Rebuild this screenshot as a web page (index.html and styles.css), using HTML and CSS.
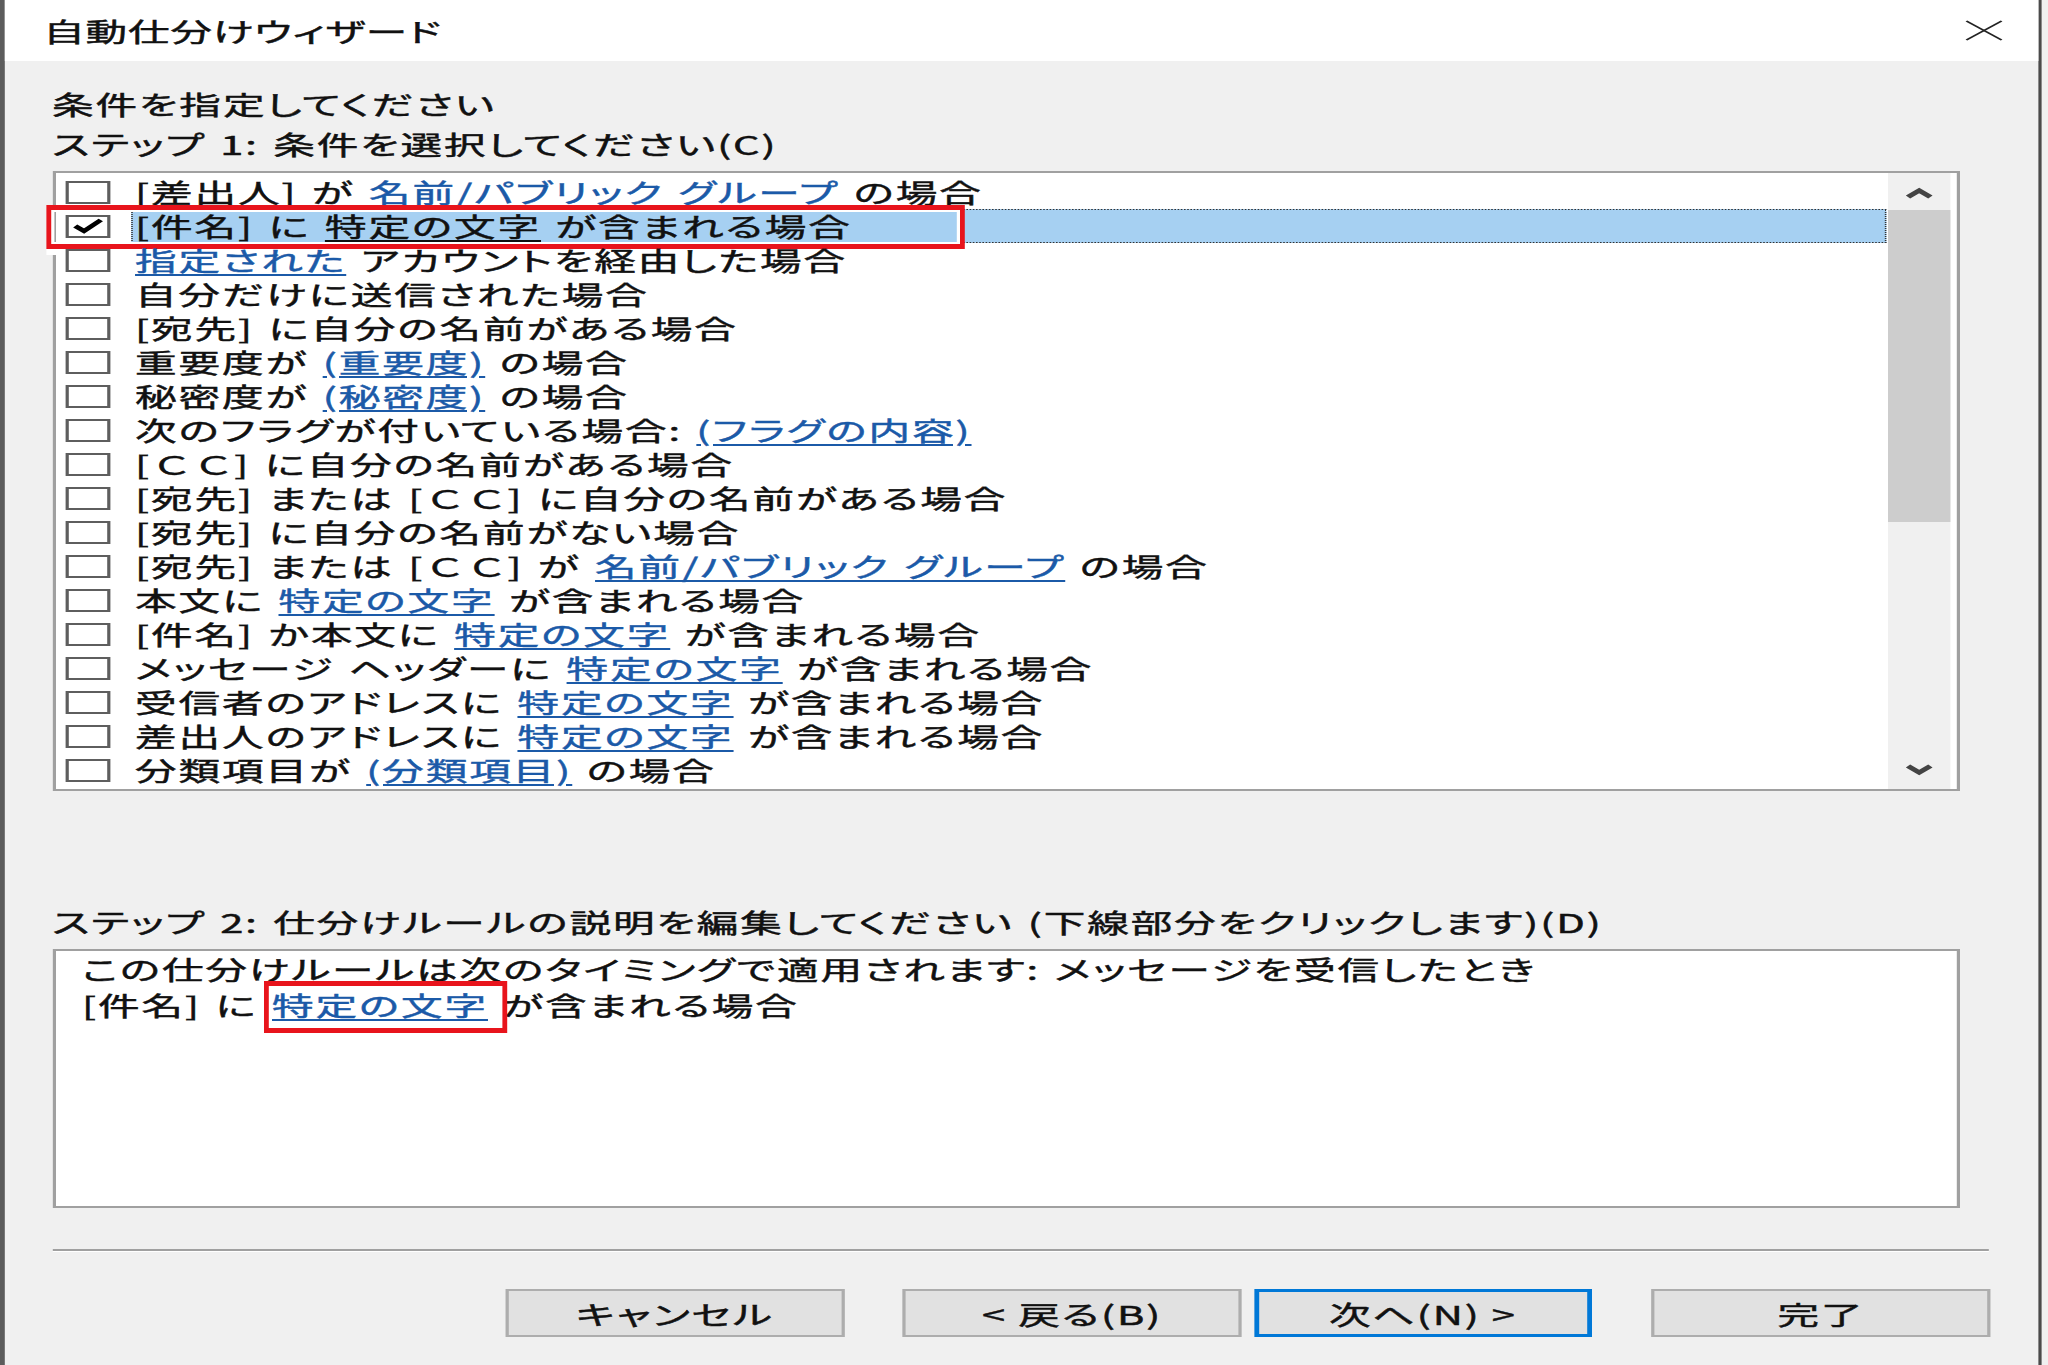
FILE: index.html
```html
<!DOCTYPE html>
<html lang="ja">
<head>
    <meta charset="UTF-8" />
    <title>自動仕分けウィザード</title>
    <link rel="stylesheet" href="styles.css">
</head>
<body>
    <div class="dialog">
        <div class="titlebar">
            <span class="title">自動仕分けウィザード</span>
            <svg class="close" width="26" height="23" viewBox="0 0 26 23">
                <line x1="2" y1="2" x2="24" y2="21" stroke="#222" stroke-width="1.6"/>
                <line x1="24" y1="2" x2="2" y2="21" stroke="#222" stroke-width="1.6"/>
            </svg>
        </div>
        <div class="content">
            <div class="label">条件を指定してください</div>
            <div class="label">ステップ 1: 条件を選択してください(C)</div>
            <div class="listbox">
                <div class="rows">
                    <div class="row"><span class="cb"></span><span class="text">[差出人] が <a class="link">名前/パブリック グループ</a> の場合</span></div>
                    <div class="row sel"><span class="cb">
                        <svg width="24" height="18" viewBox="0 0 24 18"><polyline points="4,9 9.5,14 20,3" fill="none" stroke="#000" stroke-width="3.8"/></svg>
                    </span><span class="text">[件名] に <a class="link">特定の文字</a> が含まれる場合</span></div>
                    <div class="row"><span class="cb"></span><span class="text"><a class="link">指定された</a> アカウントを経由した場合</span></div>
                    <div class="row"><span class="cb"></span><span class="text">自分だけに送信された場合</span></div>
                    <div class="row"><span class="cb"></span><span class="text">[宛先] に自分の名前がある場合</span></div>
                    <div class="row"><span class="cb"></span><span class="text">重要度が <a class="link">(重要度)</a> の場合</span></div>
                    <div class="row"><span class="cb"></span><span class="text">秘密度が <a class="link">(秘密度)</a> の場合</span></div>
                    <div class="row"><span class="cb"></span><span class="text">次のフラグが付いている場合: <a class="link">(フラグの内容)</a></span></div>
                    <div class="row"><span class="cb"></span><span class="text">[<span class="fw">ＣＣ</span>] に自分の名前がある場合</span></div>
                    <div class="row"><span class="cb"></span><span class="text">[宛先] または [<span class="fw">ＣＣ</span>] に自分の名前がある場合</span></div>
                    <div class="row"><span class="cb"></span><span class="text">[宛先] に自分の名前がない場合</span></div>
                    <div class="row"><span class="cb"></span><span class="text">[宛先] または [<span class="fw">ＣＣ</span>] が <a class="link">名前/パブリック グループ</a> の場合</span></div>
                    <div class="row"><span class="cb"></span><span class="text">本文に <a class="link">特定の文字</a> が含まれる場合</span></div>
                    <div class="row"><span class="cb"></span><span class="text">[件名] か本文に <a class="link">特定の文字</a> が含まれる場合</span></div>
                    <div class="row"><span class="cb"></span><span class="text">メッセージ ヘッダーに <a class="link">特定の文字</a> が含まれる場合</span></div>
                    <div class="row"><span class="cb"></span><span class="text">受信者のアドレスに <a class="link">特定の文字</a> が含まれる場合</span></div>
                    <div class="row"><span class="cb"></span><span class="text">差出人のアドレスに <a class="link">特定の文字</a> が含まれる場合</span></div>
                    <div class="row"><span class="cb"></span><span class="text">分類項目が <a class="link">(分類項目)</a> の場合</span></div>
                </div>
                <div class="scrollbar">
                    <div class="sb-btn">
                        <svg width="19" height="12" viewBox="0 0 19 12"><polyline points="2.5,10 9.5,3.5 16.5,10" fill="none" stroke="#444" stroke-width="4"/></svg>
                    </div>
                    <div class="sb-thumb"></div>
                    <div class="sb-track"></div>
                    <div class="sb-btn">
                        <svg width="19" height="12" viewBox="0 0 19 12"><polyline points="2.5,2 9.5,8.5 16.5,2" fill="none" stroke="#444" stroke-width="4"/></svg>
                    </div>
                </div>
            </div>

            <div class="label step2">ステップ 2: 仕分けルールの説明を編集してください (下線部分をクリックします)(D)</div>
            <div class="desc">
                <div>この仕分けルールは次のタイミングで適用されます: メッセージを受信したとき</div>
                <div>[件名] に <a class="link marked">特定の文字</a> が含まれる場合</div>
            </div>

            <div class="separator"></div>

            <div class="buttons">
                <button class="btn btn-cancel">キャンセル</button>
                <button class="btn btn-back">&lt; 戻る(B)</button>
                <button class="btn btn-next">次へ(N) &gt;</button>
                <button class="btn btn-finish">完了</button>
            </div>
        </div>
    </div>
</body>
</html>
```

FILE: styles.css
```css
/* the screenshot is stretched sideways, so the dialog is laid out
   narrow and widened with one scaleX on the root */
body {
    margin: 0;
    background: #f0f0f0;
    font-family: "Noto Sans CJK JP", "Noto Sans", sans-serif;
    font-size: 26px;
    letter-spacing: 1.2px;
    word-spacing: 2px;
    color: #111;
    font-feature-settings: "palt";
    -webkit-text-stroke: 0.45px currentColor;
    overflow: hidden;
}

.dialog {
    width: 1276px;
    height: 1365px;
    box-sizing: border-box;
    transform: scaleX(1.6);
    transform-origin: 0 0;
    background: #f0f0f0;
    border-left: 3px solid #5c5c5c;
    border-right: 2px solid #4a4a4a;
    display: flex;
    flex-direction: column;
}

.titlebar {
    height: 61px;
    flex: none;
    background: #fff;
    display: flex;
    align-items: center;
    justify-content: space-between;
    padding: 0 21px 0 24px;
}
.title { line-height: 40px; letter-spacing: 0.5px; }
.close { display: block; }

.content {
    padding: 23px 0 0 29.5px;
}

.label {
    line-height: 40px;
    white-space: nowrap;
}
.step2 { margin-top: 111px; }

/* full-width letters keep their whole cell, as in the original */
.fw {
    font-feature-settings: normal;
    letter-spacing: 0;
}

/* condition list */
.listbox {
    width: 1192px;
    height: 620px;
    box-sizing: border-box;
    margin-top: 7px;
    border: 2px solid #a0a0a0;
    background: #fff;
    display: flex;
}
.rows {
    flex: 1;
    padding-top: 2px;
}
.row {
    height: 34px;
    display: flex;
    align-items: center;
    position: relative;
}
.cb {
    width: 28px;
    height: 23px;
    box-sizing: border-box;
    margin-left: 6px;
    border: 2px solid #5e5e5e;
    background: #fff;
    flex: none;
    display: flex;
    align-items: center;
    justify-content: center;
}
.cb svg { display: block; }
.text {
    flex: 1;
    margin: 0 1px 0 13.4px;
    padding-left: 2.5px;
    height: 34px;
    line-height: 34px;
    white-space: nowrap;
}
.row.sel .text {
    background: #a6d0f2;
    outline: 1px dotted #333;
    outline-offset: -1px;
}
.row.sel .link { color: #111; }

/* red annotation boxes */
.row.sel::after {
    content: '';
    position: absolute;
    left: -5.1px;
    top: -4px;
    width: 574px;
    height: 44px;
    box-sizing: border-box;
    border: 5px solid #e8141c;
    border-left-width: 3.2px;
    border-right-width: 3.2px;
    box-shadow: inset 0 0 0 2px #fff, 0 6px 0 0 #fff;
}
.marked { position: relative; }
.marked::after {
    content: '';
    position: absolute;
    left: -5px;
    right: -11.5px;
    top: -5px;
    bottom: -10px;
    border: 5px solid #e8141c;
    border-left-width: 3.2px;
    border-right-width: 3.2px;
    box-shadow: inset 0 0 0 2px #fff;
}

.link {
    color: #1b5aa8;
    text-decoration: underline;
    text-underline-offset: 3px;
}

.scrollbar {
    width: 38.75px;
    margin-right: 3.6px;
    padding: 2px 0;
    display: flex;
    flex-direction: column;
    background: #f0f0f0;
}
.sb-btn {
    height: 35px;
    flex: none;
    display: flex;
    align-items: center;
    justify-content: center;
}
.sb-btn svg { display: block; }
.sb-thumb {
    height: 312px;
    background: #cdcdcd;
}
.sb-track { flex: 1; }

/* description */
.desc {
    width: 1192px;
    height: 259px;
    box-sizing: border-box;
    margin-top: 7px;
    border: 2px solid #a0a0a0;
    background: #fff;
    padding-left: 16.75px;
    line-height: 36px;
    white-space: nowrap;
}

.separator {
    width: 1210px;
    margin-top: 41px;
    border-top: 2px solid #a0a0a0;
    border-bottom: 1px solid #fff;
}

.buttons {
    display: flex;
    margin-top: 37px;
}
.btn {
    width: 212.5px;
    height: 48px;
    box-sizing: border-box;
    border: 2px solid #adadad;
    background: #e1e1e1;
    font: inherit;
    letter-spacing: inherit;
    color: #111;
    padding: 0;
}
.btn-cancel { margin-left: 283.1px; }
.btn-back { margin-left: 35.75px; }
.btn-next {
    margin-left: 7.5px;
    width: 211px;
    border: 3px solid #0078d7;
}
.btn-finish { margin-left: 37px; }
```
